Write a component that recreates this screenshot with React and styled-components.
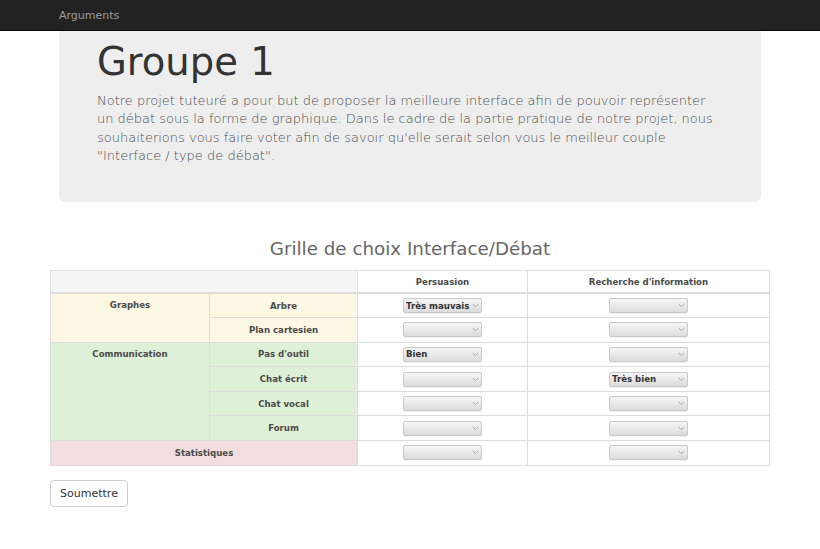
import React, { useState } from 'react';
import styled, { createGlobalStyle } from 'styled-components';

const GlobalStyle = createGlobalStyle`
  body {
    margin: 0;
    background: #fff;
    font-family: "DejaVu Sans", "Liberation Sans", sans-serif;
    color: #333;
  }
`;

const Navbar = styled.div`
  height: 31px;
  background: #222;
  border-bottom: 1px solid #080808;
  box-sizing: border-box;
  padding-left: 59px;
  display: flex;
  align-items: center;
`;

const Brand = styled.span`
  font-size: 11px;
  color: #9d9d9d;
`;

const Container = styled.div`
  width: 720px;
  margin: 0 auto;
`;

const Jumbotron = styled.div`
  margin: 0 9px;
  height: 171px;
  box-sizing: border-box;
  padding: 8px 38px 0;
  background: #eee;
  border-radius: 0 0 6px 6px;
`;

const Title = styled.h1`
  margin: 0;
  font-size: 38.5px;
  font-weight: 400;
  line-height: 46px;
  color: #333;
`;

const Lead = styled.p`
  margin: 7px 0 0;
  font-size: 13px;
  font-weight: 200;
  line-height: 18.4px;
  color: #4d4d4d;
`;

const GridTitle = styled.h3`
  margin: 36px 0 11px;
  text-align: center;
  font-size: 18.3px;
  font-weight: 400;
  color: #666;
`;

const Table = styled.table`
  width: 100%;
  border-collapse: collapse;
  font-size: 8.6px;
  font-weight: 700;
  color: #4a4a4a;
  border: 1px solid #ddd;
`;

const tones = {
  active: '#f5f5f5',
  warning: '#fcf8e3',
  success: '#dff0d8',
  danger: '#f2dede',
  none: '#fff',
};

const Th = styled.th`
  height: 21px;
  padding: 0 4px;
  text-align: center;
  background: ${(p) => tones[p.tone || 'none']};
  border-left: 1px solid #ddd;
  border-bottom: 2px solid #ddd;
  font-weight: 700;
`;

const Td = styled.td`
  height: 24.6px;
  padding: 0 4px;
  text-align: center;
  vertical-align: ${(p) => (p.top ? 'top' : 'middle')};
  background: ${(p) => tones[p.tone || 'none']};
  border-top: 1px solid #ddd;
  border-left: 1px solid #ddd;
  padding-top: ${(p) => (p.top ? '6px' : '0')};
  box-sizing: border-box;
`;

const SelectWrap = styled.span`
  position: relative;
  display: inline-block;
  vertical-align: middle;
`;

const Select = styled.select`
  appearance: none;
  width: 79px;
  height: 15px;
  padding: 0 0 0 2px;
  margin: 0;
  font-family: "DejaVu Sans", sans-serif;
  font-size: 8.6px;
  font-weight: 700;
  color: #333;
  border: 1px solid #c8c8c8;
  border-radius: 2px;
  background: linear-gradient(#f6f6f6, #dcdcdc);
  box-shadow: 0 1px 0 rgba(0, 0, 0, 0.05);
  display: block;
  outline: none;
`;

const Chevron = styled.svg`
  position: absolute;
  right: 3px;
  top: 5px;
  pointer-events: none;
`;

const Button = styled.button`
  margin-top: 14px;
  height: 27px;
  width: 78px;
  padding: 0;
  font-family: "DejaVu Sans", sans-serif;
  font-size: 11px;
  color: #333;
  background: #fff;
  border: 1px solid #ccc;
  border-radius: 4px;
`;

const options = ['', 'Très mauvais', 'Mauvais', 'Moyen', 'Bien', 'Très bien'];

function Choice({ initial }) {
  const [value, setValue] = useState(initial || '');
  return (
    <SelectWrap>
      <Select value={value} onChange={(e) => setValue(e.target.value)}>
        {options.map((o) => (
          <option key={o} value={o}>{o}</option>
        ))}
      </Select>
      <Chevron width="7" height="5" viewBox="0 0 7 5">
        <path d="M0.8 1 L3.5 3.6 L6.2 1" fill="none" stroke="#a8a8a8" strokeWidth="1" />
      </Chevron>
    </SelectWrap>
  );
}

const rows = [
  { group: 'Graphes', span: 2, tone: 'warning', item: 'Arbre', a: 'Très mauvais', b: '' },
  { tone: 'warning', item: 'Plan cartesien', a: '', b: '' },
  { group: 'Communication', span: 4, tone: 'success', item: "Pas d'outil", a: 'Bien', b: '' },
  { tone: 'success', item: 'Chat écrit', a: '', b: 'Très bien' },
  { tone: 'success', item: 'Chat vocal', a: '', b: '' },
  { tone: 'success', item: 'Forum', a: '', b: '' },
];

export default function App() {
  return (
    <>
      <GlobalStyle />
      <Navbar>
        <Brand>Arguments</Brand>
      </Navbar>
      <Container>
        <Jumbotron>
          <Title>Groupe 1</Title>
          <Lead>
            Notre projet tuteuré a pour but de proposer la meilleure interface afin de pouvoir représenter
            un débat sous la forme de graphique. Dans le cadre de la partie pratique de notre projet, nous
            souhaiterions vous faire voter afin de savoir qu'elle serait selon vous le meilleur couple
            "Interface / type de débat".
          </Lead>
        </Jumbotron>
        <GridTitle>Grille de choix Interface/Débat</GridTitle>
        <Table>
          <colgroup>
            <col style={{ width: 159 }} />
            <col style={{ width: 148 }} />
            <col style={{ width: 170 }} />
            <col />
          </colgroup>
          <thead>
            <tr>
              <Th colSpan={2} tone="active"></Th>
              <Th>Persuasion</Th>
              <Th>Recherche d'information</Th>
            </tr>
          </thead>
          <tbody>
            {rows.map((r) => (
              <tr key={r.item}>
                {r.group && (
                  <Td rowSpan={r.span} tone={r.tone} top>
                    {r.group}
                  </Td>
                )}
                <Td tone={r.tone}>{r.item}</Td>
                <Td><Choice initial={r.a} /></Td>
                <Td><Choice initial={r.b} /></Td>
              </tr>
            ))}
            <tr>
              <Td colSpan={2} tone="danger">Statistiques</Td>
              <Td><Choice /></Td>
              <Td><Choice /></Td>
            </tr>
          </tbody>
        </Table>
        <Button>Soumettre</Button>
      </Container>
    </>
  );
}
